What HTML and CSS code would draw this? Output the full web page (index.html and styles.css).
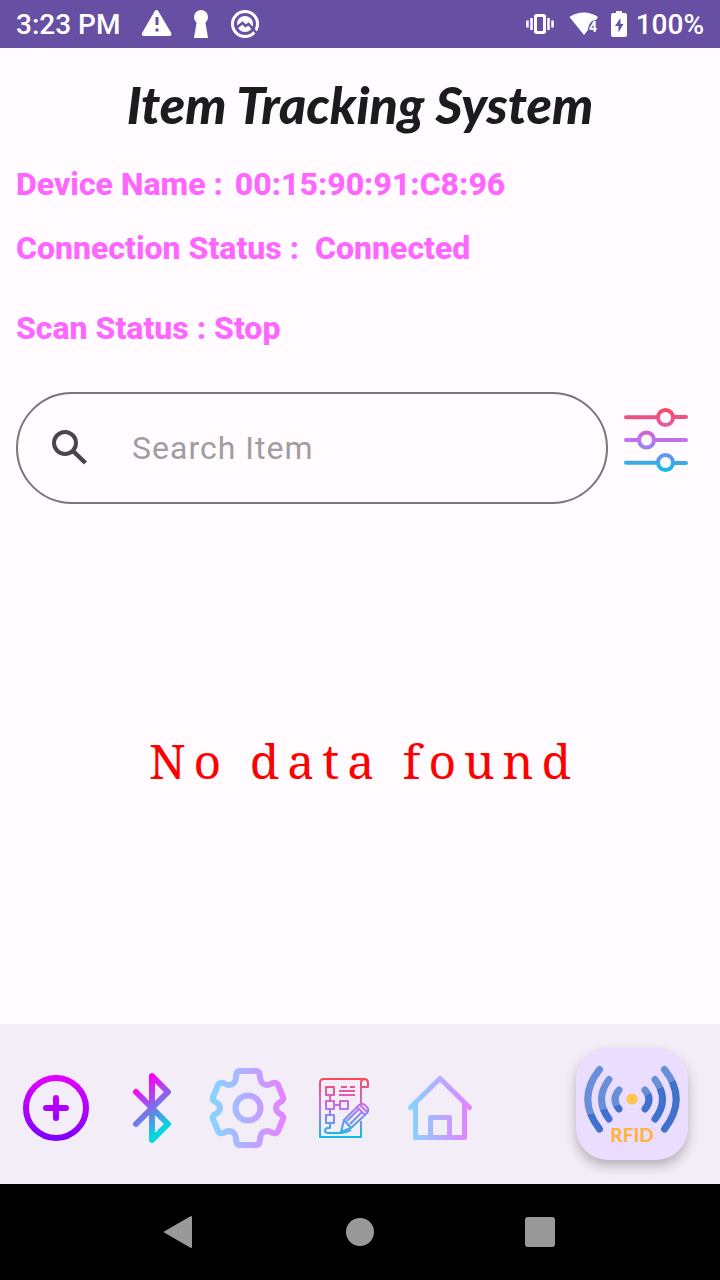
FILE: index.html
```
<!DOCTYPE html>
<html lang="en">
<head>
<meta charset="utf-8">
<meta name="viewport" content="width=device-width, initial-scale=1">
<title>Item Tracking System</title>
<link rel="stylesheet" href="styles.css">
</head>
<body>
<div class="screen">
  <header class="status-bar">
    <div class="status-group">
      <span class="clock">3:23 PM</span>
      <svg class="icon-alerts" width="120" height="32" viewBox="141 8 120 32" aria-hidden="true">
        <path d="M156.500 12 169.500 34H143.800Z" fill="#fff" stroke="#fff" stroke-width="4" stroke-linejoin="round"/>
        <path d="M157 17v8M157 28.500v3" stroke="#6750a4" stroke-width="3"/>
        <circle cx="201" cy="17" r="7" fill="#fff"/>
        <path d="M197 20h8l3 18h-14z" fill="#fff"/>
        <circle cx="245" cy="24" r="12.500" fill="none" stroke="#fff" stroke-width="3"/>
        <circle cx="245" cy="24" r="8" fill="#fff"/>
        <path d="M236 28l6.500-5 3 3 3-2 8 9" fill="none" stroke="#6750a4" stroke-width="2.500"/>
      </svg>
    </div>
    <div class="status-group">
      <svg width="104" height="32" viewBox="525 8 104 32" aria-hidden="true">
        <rect x="535.500" y="15.500" width="9" height="17" rx="1" fill="none" stroke="#fff" stroke-width="3"/>
        <path d="M531.500 18v12M527.500 20.500v7M548.500 18v12M552.500 20.500v7" stroke="#fff" stroke-width="2.500"/>
        <path d="M569.500 17c8-6 20.500-6 28.500 0l-2 3c-5 0-7 4-8 9v1l-4 5z" fill="#fff"/>
        <text class="wifi-text" x="589" y="32">4</text>
        <path d="M616 11h6v2h3a2 2 0 0 1 2 2v20a2 2 0 0 1-2 2h-12a2 2 0 0 1-2-2v-20a2 2 0 0 1 2-2h3z" fill="#fff"/>
        <path d="M620.500 18l-5.500 8h3.500v6.500l5-8.500h-3z" fill="#6750a4"/>
      </svg>
      <span class="battery">100%</span>
    </div>
  </header>

  <main class="content">
    <h1 class="title">Item Tracking System</h1>
    <dl class="details">
      <div class="detail"><dt>Device Name :</dt><dd class="value-device">00:15:90:91:C8:96</dd></div>
      <div class="detail"><dt>Connection Status :</dt><dd class="value-connection">Connected</dd></div>
      <div class="detail detail-scan"><dt>Scan Status :</dt><dd>Stop</dd></div>
    </dl>
    <div class="search-row">
      <label class="search">
        <svg width="40" height="40" viewBox="50 428 40 40" fill="none" stroke="#49454f" aria-hidden="true">
          <circle cx="65" cy="443" r="11" stroke-width="4"/>
          <path d="M73.500 451.500 85.500 463" stroke-width="4.500"/>
        </svg>
        <input class="search-input" type="text" placeholder="Search Item" aria-label="Search Item">
      </label>
      <button class="icon-button" type="button" aria-label="Filter">
        <svg width="64" height="64" viewBox="624 408 64 64" fill="none" stroke="url(#filterFill)" stroke-width="4" stroke-linecap="round" aria-hidden="true">
          <defs><linearGradient id="filterFill" gradientUnits="userSpaceOnUse" x1="0" y1="408" x2="0" y2="472"><stop offset="0" stop-color="#fd4755"/><stop offset=".5" stop-color="#c071ef"/><stop offset="1" stop-color="#06c0e7"/></linearGradient></defs>
          <path d="M626 417.200h31M673 417.100h13M626 440h13M655 440.100h31M626 462.800h31M673 462.900h13"/>
          <circle cx="665.500" cy="417.500" r="7.500"/><circle cx="646.500" cy="440" r="7.500"/><circle cx="665.500" cy="462.500" r="7.500"/>
        </svg>
      </button>
    </div>
    <p class="empty">No data found</p>
  </main>

  <footer class="action-bar">
    <nav class="actions" aria-label="Actions">
      <button class="action" type="button" aria-label="Add">
        <svg width="80" height="80" viewBox="16 1068 80 80" fill="none" stroke="url(#addFill)" aria-hidden="true">
          <defs><linearGradient id="addFill" gradientUnits="userSpaceOnUse" x1="0" y1="1075" x2="0" y2="1141"><stop stop-color="#e600ff"/><stop offset="1" stop-color="#7b00ff"/></linearGradient></defs>
          <circle cx="56" cy="1108" r="30" stroke-width="6"/>
          <path d="M56 1098v20M46 1108h20" stroke-width="6" stroke-linecap="round"/>
        </svg>
      </button>
      <button class="action" type="button" aria-label="Bluetooth">
        <svg width="80" height="80" viewBox="112 1068 80 80" fill="none" stroke="url(#btFill)" aria-hidden="true">
          <defs><linearGradient id="btFill" gradientUnits="userSpaceOnUse" x1="136" y1="1088" x2="168" y2="1132"><stop offset="0" stop-color="#ff00f5"/><stop offset=".9" stop-color="#05d6df"/></linearGradient></defs>
          <path d="M136 1092l32 32-16 16v-64l16 16-32 32" stroke-width="6" stroke-linecap="round" stroke-linejoin="round"/>
        </svg>
      </button>
      <button class="action" type="button" aria-label="Settings">
        <svg width="80" height="80" viewBox="208 1068 80 80" fill="none" stroke="url(#gearFill)" stroke-width="6" stroke-linejoin="round" aria-hidden="true">
          <defs><linearGradient id="gearFill" gradientUnits="userSpaceOnUse" x1="209" y1="0" x2="287" y2="0"><stop offset="0" stop-color="#82d7ff"/><stop offset="1" stop-color="#e880ff"/></linearGradient></defs>
          <path d="M240 1071H256Q259 1071 259.500 1074L260.500 1080Q262 1085 268 1085L273 1083Q276 1082 278 1085L283 1097Q284 1099 282 1101Q276 1104 276 1108Q276 1112 282 1115Q284 1117 283 1119L278 1131Q276 1134 273 1133L268 1131Q262 1131 260.500 1136L259.500 1142Q259 1145 256 1145H240Q237 1145 236.500 1142L235.500 1136Q234 1131 228 1131L223 1133Q220 1134 218 1131L213 1119Q212 1117 214 1115Q220 1112 220 1108Q220 1104 214 1101Q212 1099 213 1097L218 1085Q220 1082 223 1083L228 1085Q234 1085 235.500 1080L236.500 1074Q237 1071 240 1071Z"/>
          <circle cx="248" cy="1108" r="12.500"/>
        </svg>
      </button>
      <button class="action" type="button" aria-label="Reports">
        <svg width="80" height="80" viewBox="304 1068 80 80" fill="none" stroke="url(#docFill)" stroke-width="2" stroke-linejoin="round" aria-hidden="true">
          <defs><linearGradient id="docFill" gradientUnits="userSpaceOnUse" x1="0" y1="1078" x2="0" y2="1138"><stop offset="0" stop-color="#fd4755"/><stop offset=".48" stop-color="#c071ef"/><stop offset="1" stop-color="#06c0e7"/></linearGradient></defs>
          <path d="M361 1121v16h-41v-54q0-4 4-4h40q4 0 4 4v4h-7v18M361 1087v-4q0-4 4-4"/>
          <path d="M326 1087h8v8h-8zM326 1101h8v8h-8zM340 1101h8v8h-8zM326 1115h8v8h-8zM330 1095v6M334 1105h6M330 1109v6M330 1123v5h-2q-3 0-3 3 0 2 4 2h12q5 0 10-3M341 1087h6M350 1087h5M339 1091h16M339 1095h16"/>
          <path d="M341 1132l3-12 15-15q3-3 7 1t1 7l-16 15zM344 1120l7 8M357 1107l8 8M359.500 1104.500l8 8M347 1121l12-12M350 1124l12-12"/>
        </svg>
      </button>
      <button class="action" type="button" aria-label="Home">
        <svg width="80" height="80" viewBox="400 1068 80 80" fill="none" stroke="url(#homeFill)" stroke-width="5" stroke-linecap="round" stroke-linejoin="round" aria-hidden="true">
          <defs><linearGradient id="homeFill" gradientUnits="userSpaceOnUse" x1="408" y1="0" x2="472" y2="0"><stop offset="0" stop-color="#82d7ff"/><stop offset="1" stop-color="#e880ff"/></linearGradient></defs>
          <path d="M410.500 1107.500 440 1078.500l29.500 29M415.500 1104v33.500h49V1104M430.500 1137v-19.500h19V1137"/>
        </svg>
      </button>
    </nav>
    <button class="scan-button" type="button" aria-label="Scan RFID">
      <svg width="112" height="112" viewBox="576 1048 112 112" fill="none" aria-hidden="true">
        <defs>
          <linearGradient id="waveLeft" gradientUnits="userSpaceOnUse" x1="590" y1="1066" x2="610" y2="1132"><stop offset=".67" stop-color="#688fd8"/><stop offset=".67" stop-color="#4071cc"/></linearGradient>
          <linearGradient id="waveMid" gradientUnits="userSpaceOnUse" x1="605" y1="1070" x2="622" y2="1128"><stop offset=".62" stop-color="#688fd8"/><stop offset=".62" stop-color="#4071cc"/></linearGradient>
          <linearGradient id="waveRight" gradientUnits="userSpaceOnUse" x1="650" y1="1054" x2="692" y2="1132"><stop offset=".39" stop-color="#688fd8"/><stop offset=".39" stop-color="#4071cc"/></linearGradient>
        </defs>
        <g stroke-width="7" stroke-linecap="round">
          <path d="M599.500 1069.500q-23.500 29.500 0 59.500" stroke="url(#waveLeft)"/>
          <path d="M609 1079.500q-15 20 0 39.500M619 1090q-8 9.500 0 19" stroke="url(#waveMid)"/>
          <path d="M664.500 1069.500q23.500 29.500 0 59.500M655 1079.500q15 20 0 39.500M645 1090q8 9.500 0 19" stroke="url(#waveRight)"/>
        </g>
        <circle cx="632" cy="1099" r="5.500" fill="#ffc64b"/>
        <text class="rfid-text" x="632" y="1142" text-anchor="middle">RFID</text>
      </svg>
    </button>
  </footer>

  <nav class="system-nav" aria-label="System">
    <button class="system-button" type="button" aria-label="Back">
      <svg width="32" height="36" viewBox="164 1214 32 36" aria-hidden="true"><path d="M165 1232 191 1217v30z" fill="#999" stroke="#999" stroke-width="2" stroke-linejoin="round"/></svg>
    </button>
    <button class="system-button" type="button" aria-label="Home screen">
      <svg width="32" height="32" viewBox="0 0 32 32" aria-hidden="true"><circle cx="16" cy="16" r="14" fill="#999"/></svg>
    </button>
    <button class="system-button" type="button" aria-label="Recent apps">
      <svg width="32" height="32" viewBox="0 0 32 32" aria-hidden="true"><rect x="1" y="1" width="30" height="30" rx="3" fill="#999"/></svg>
    </button>
  </nav>
</div>
</body>
</html>
```
FILE: styles.css
```
* { box-sizing: border-box; }

body {
  margin: 0;
  background: #fffbff;
  color: #1c1b1f;
  font-family: Roboto, "Liberation Sans", sans-serif;
}

button {
  display: flex;
  align-items: center;
  justify-content: center;
  padding: 0;
  border: 0;
  background: none;
  cursor: pointer;
}

svg { display: block; flex-shrink: 0; }

.screen {
  display: flex;
  flex-direction: column;
  min-height: 100vh;
}

.status-bar {
  display: flex;
  align-items: center;
  justify-content: space-between;
  height: 48px;
  padding: 0 16px;
  background: #6750a4;
  color: #fff;
  font-size: 28px;
  font-weight: 500;
  line-height: 32px;
}

.status-group { display: flex; align-items: center; }
.clock, .battery { padding-top: 2px; }
.icon-alerts { margin-left: 21px; }
.battery { margin-left: 7px; }

.wifi-text {
  fill: #fff;
  font-size: 14px;
  font-weight: 700;
}

.content {
  display: flex;
  flex: 1;
  flex-direction: column;
  padding: 24px 16px 0;
}

.title {
  margin: 0;
  font-family: Lato, "Liberation Sans", sans-serif;
  font-size: 52px;
  font-style: italic;
  font-weight: 900;
  line-height: 64px;
  text-align: center;
}

.details {
  margin: 28px 0 0;
  color: #ff66ff;
  font-size: 32px;
  font-weight: 800;
  line-height: 40px;
}

.detail { display: flex; gap: 8px; margin-bottom: 24px; }
.detail dd { margin: 0; }
.detail .value-device { margin-left: 4px; }
.detail .value-connection { margin-left: 8px; }
.detail-scan { margin: 40px 0 44px; }

.search-row {
  display: flex;
  align-items: flex-start;
  gap: 16px;
  padding-right: 16px;
}

.search {
  display: flex;
  flex: 1;
  align-items: center;
  gap: 42px;
  min-width: 0;
  height: 112px;
  padding: 0 32px;
  border: 2px solid #79747e;
  border-radius: 56px;
}

.search-input {
  flex: 1;
  min-width: 0;
  padding: 0;
  border: 0;
  outline: 0;
  background: none;
  color: #1c1b1f;
  font: 32px/40px Roboto, "Liberation Sans", sans-serif;
  letter-spacing: 1px;
}

.search-input::placeholder { color: #a09da1; opacity: 1; }

.icon-button { margin-top: 16px; }

.empty {
  display: flex;
  flex: 1;
  align-items: center;
  justify-content: center;
  margin: 0;
  padding: 0 0 8px 8px;
  color: #ff0000;
  font-family: "Noto Serif", "DejaVu Serif", serif;
  font-size: 48px;
  letter-spacing: 8px;
}

.action-bar {
  display: flex;
  align-items: center;
  justify-content: space-between;
  min-height: 160px;
  padding: 0 32px 0 8px;
  background: #f3edf7;
}

.actions { display: flex; padding-top: 8px; }
.action { width: 96px; height: 96px; }

.scan-button {
  border-radius: 32px;
  background: #eaddff;
  box-shadow: 0 6px 12px rgba(0, 0, 0, 0.25);
}

.rfid-text {
  fill: #ffb341;
  font-family: Lato, sans-serif;
  font-size: 19px;
  font-weight: 900;
}

.system-nav {
  display: flex;
  align-items: center;
  justify-content: center;
  gap: 84px;
  height: 96px;
  background: #000;
}

.system-button { width: 96px; height: 96px; }
```
